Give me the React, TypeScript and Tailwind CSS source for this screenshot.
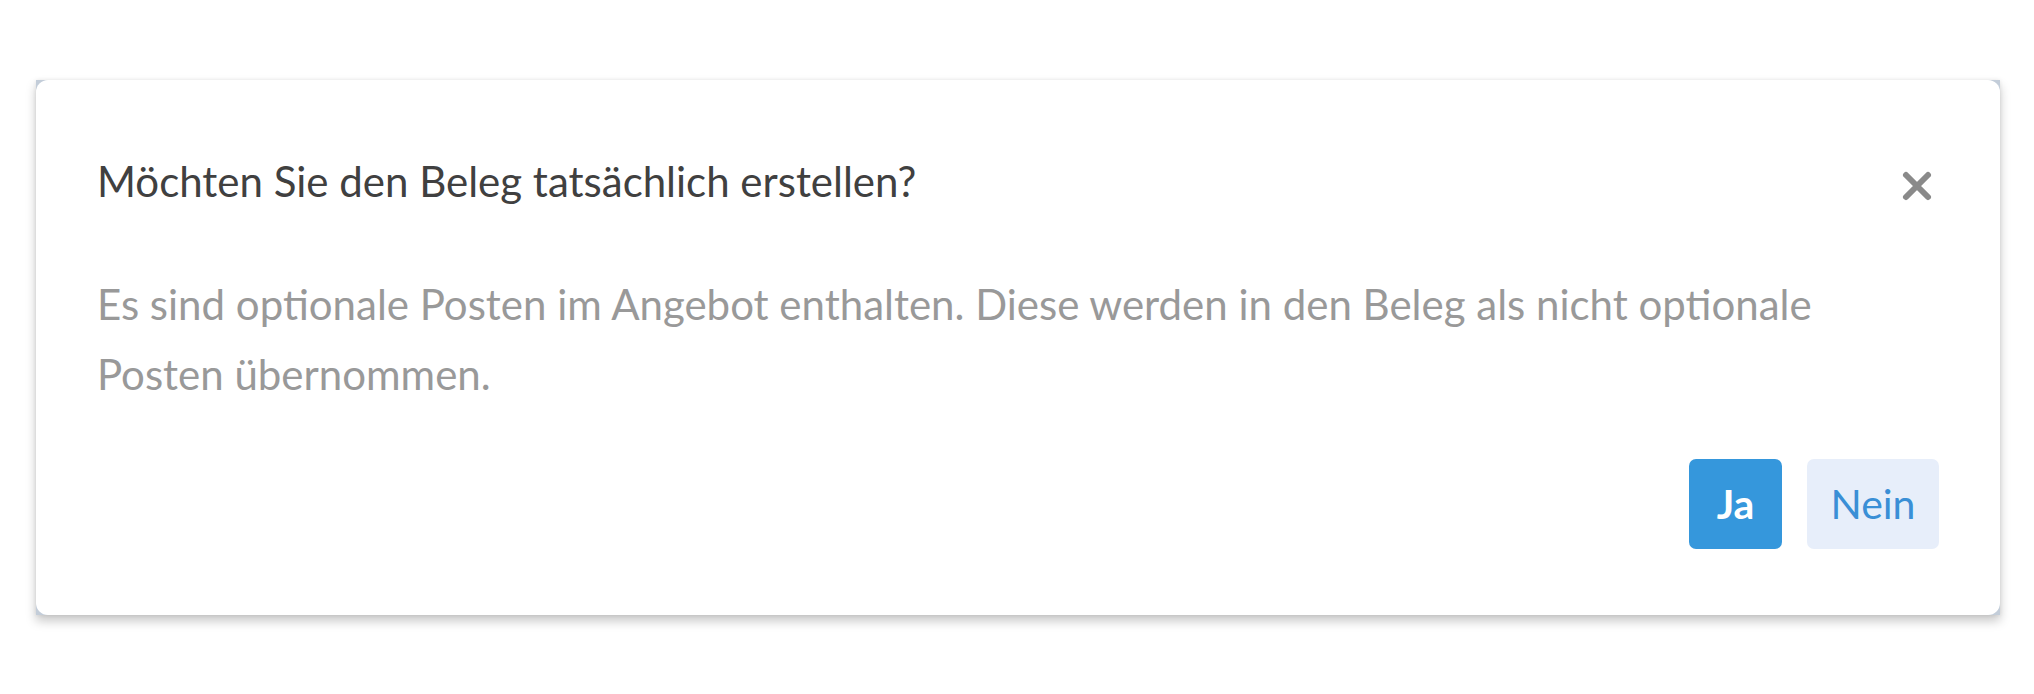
import React from "react";

// Confirmation dialog shown before a Beleg is created from an Angebot
function CloseIcon() {
  return (
    <svg width="32" height="32" viewBox="0 0 32 32" aria-hidden="true">
      <path d="M5 5 L27 27 M27 5 L5 27" stroke="#8a8a8a" strokeWidth="6" strokeLinecap="round" />
    </svg>
  );
}

export default function App() {
  return (
    <div className="min-h-[694px] w-full bg-white pt-[80px] pl-[36px] pr-[34px]" style={{ fontFamily: "Lato, 'Open Sans', sans-serif" }}>
      <div className="bg-[#c3cdd9] shadow-[0_6px_10px_rgba(0,0,0,0.22),0_0_4px_rgba(0,0,0,0.08)]">
        <div className="rounded-[12px] bg-white px-[61px] pt-[73px] pb-[66px]">
          <div className="flex items-center justify-between">
            <h2 className="text-[42px] leading-[56px] text-[#404040]">Möchten Sie den Beleg tatsächlich erstellen?</h2>
            <button className="mr-[6px] mt-[10px] flex items-center justify-center" aria-label="Schließen">
              <CloseIcon />
            </button>
          </div>
          <p className="mt-[60px] text-[42px] leading-[70px] text-[#999999]">
            Es sind optionale Posten im Angebot enthalten. Diese werden in den Beleg als nicht optionale
            <br />
            Posten übernommen.
          </p>
          <div className="mt-[50px] flex justify-end gap-[25px]">
            <button className="h-[90px] w-[93px] rounded-[7px] bg-[#3597dc] text-[41px] font-bold text-white">Ja</button>
            <button className="h-[90px] w-[132px] rounded-[7px] bg-[#e7eefa] text-[41px] text-[#3a8fd6]">Nein</button>
          </div>
        </div>
      </div>
    </div>
  );
}
